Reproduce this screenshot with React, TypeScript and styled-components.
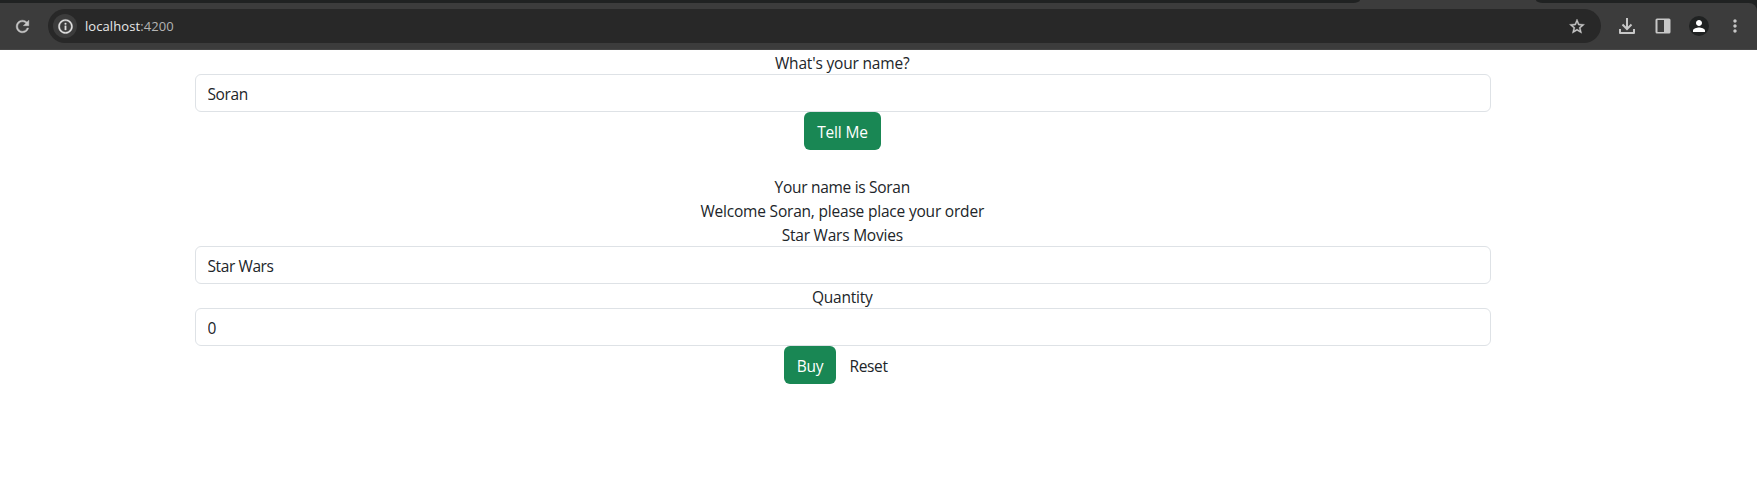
import React from "react";
import styled, { createGlobalStyle } from "styled-components";
import { MdRefresh, MdInfoOutline, MdStarBorder, MdPerson, MdMoreVert } from "react-icons/md";

const GlobalStyle = createGlobalStyle`
  *, *::before, *::after { box-sizing: border-box; }
  body {
    margin: 0;
    background: #fff;
    color: #212529;
    font-family: "Open Sans", "Noto Sans", sans-serif;
    font-size: 15.5px;
    line-height: 24px;
    overflow: hidden;
  }
`;

const Chrome = styled.header`
  height: 50px;
  background: #202222;
`;

const TabStrip = styled.div`
  display: flex;
  justify-content: space-between;
  height: 3px;
  background: #3c3c3c;
`;

const InactiveTabs = styled.div<{ $width: number; $side: "left" | "right" }>`
  width: ${(p) => p.$width}px;
  height: 3px;
  background: #202222;
  border-bottom-${(p) => (p.$side === "left" ? "right" : "left")}-radius: 7px 3px;
`;

const Toolbar = styled.div`
  display: flex;
  align-items: center;
  height: 47px;
  padding: 0 10px 0 10px;
  background: #3c3c3c;
  border-bottom: 1px solid #474747;
  border-top-right-radius: 8px;
  color: #c7c7c7;
`;

const IconSlot = styled.span<{ $width: number }>`
  display: flex;
  align-items: center;
  justify-content: center;
  flex: none;
  width: ${(p) => p.$width}px;
  height: 24px;
`;

const BoldIcon = styled(IconSlot)`
  svg {
    stroke-width: 0.5px;
  }
  path:not([fill="none"]) {
    stroke: currentColor;
  }
  path[fill="none"] {
    stroke: none;
  }
`;

const AddressBar = styled.div`
  display: flex;
  align-items: center;
  flex: none;
  width: 1553px;
  height: 34px;
  margin-left: 14px;
  margin-right: 8px;
  padding: 0 15px 0 5px;
  border-radius: 17px;
  background: #282828;
`;

const SiteInfo = styled.span`
  display: flex;
  align-items: center;
  justify-content: center;
  width: 24px;
  height: 24px;
  border-radius: 50%;
  background: #3c3c3c;
  color: #e3e3e3;

  svg {
    stroke-width: 0.5px;
  }
  path:not([fill="none"]) {
    stroke: currentColor;
  }
  path[fill="none"] {
    stroke: none;
  }
`;

const Url = styled.span`
  flex: 1;
  margin-left: 8px;
  font-size: 13px;
  line-height: 20px;
  letter-spacing: 0.08px;
  color: #e8e8e8;
`;

const Port = styled.span`
  color: #b4b4b4;
`;

const Avatar = styled.span`
  display: flex;
  align-items: center;
  justify-content: center;
  width: 20px;
  height: 20px;
  border-radius: 50%;
  background: #202222;
  color: #fff;
`;

const Page = styled.main`
  width: 1296px;
  margin-left: 195px;
  text-align: center;
`;

const Line = styled.div<{ $spacing: number }>`
  height: 24px;
  padding: 1px 1.500px 0 0;
  letter-spacing: ${(p) => p.$spacing}px;
`;

const Field = styled.input<{ $spacing?: number }>`
  display: block;
  width: 100%;
  height: 38px;
  padding: 7px 12px 5px 11.5px;
  border: 1px solid #dee2e6;
  border-radius: 6px;
  background: #fff;
  color: #212529;
  font: inherit;
  letter-spacing: ${(p) => p.$spacing ?? 0}px;
`;

const Actions = styled.div<{ $after?: number }>`
  display: flex;
  justify-content: center;
  height: 38px;
  padding-right: 1px;
  margin-bottom: ${(p) => p.$after ?? 0}px;
`;

const Button = styled.button<{ $width: number; $solid?: boolean; $spacing: number }>`
  width: ${(p) => p.$width}px;
  height: 38px;
  padding: 1px 0 0;
  border: 0;
  border-radius: 6px;
  background: ${(p) => (p.$solid ? "#198754" : "transparent")};
  color: ${(p) => (p.$solid ? "#fff" : "#212529")};
  font: inherit;
  letter-spacing: ${(p) => p.$spacing}px;
`;

const DownloadIcon = () => (
  <svg width="16" height="16" viewBox="0 0 16 16" fill="none" stroke="currentColor" strokeWidth="2">
    <path d="M8 0v10.500M3.500 6.500l4.500 4.500l4.500-4.500" />
    <path strokeLinejoin="round" d="M1 11v4h14v-4" />
  </svg>
);

const SidePanelIcon = () => (
  <svg width="16" height="16" viewBox="0 0 16 16">
    <path
      fill="currentColor"
      fillRule="evenodd"
      d="M2 .5h12a1.500 1.500 0 0 1 1.500 1.500v12a1.500 1.500 0 0 1-1.500 1.500H2A1.500 1.500 0 0 1 .5 14V2A1.500 1.500 0 0 1 2 .5zM2.500 2v12H9V2z"
    />
  </svg>
);

export default function App() {
  return (
    <>
      <GlobalStyle />
      <Chrome>
        <TabStrip>
          <InactiveTabs $width={1360} $side="left" />
          <InactiveTabs $width={221} $side="right" />
        </TabStrip>
        <Toolbar>
          <BoldIcon $width={24}><MdRefresh size={19} /></BoldIcon>
          <AddressBar>
            <SiteInfo><MdInfoOutline size={17} /></SiteInfo>
            <Url>localhost<Port>:4200</Port></Url>
            <BoldIcon $width={18}><MdStarBorder size={19} /></BoldIcon>
          </AddressBar>
          <IconSlot $width={36}><DownloadIcon /></IconSlot>
          <IconSlot $width={36}><SidePanelIcon /></IconSlot>
          <IconSlot $width={36}><Avatar><MdPerson size={18} /></Avatar></IconSlot>
          <IconSlot $width={36}><MdMoreVert size={20} /></IconSlot>
        </Toolbar>
      </Chrome>
      <Page>
        <Line $spacing={-0.18}>What's your name?</Line>
        <Field $spacing={-0.4} defaultValue="Soran" />
        <Actions $after={24}>
          <Button $width={77} $solid $spacing={-0.15}>Tell Me</Button>
        </Actions>
        <Line $spacing={-0.3}>Your name is Soran</Line>
        <Line $spacing={-0.2}>Welcome Soran, please place your order</Line>
        <Line $spacing={-0.22}>Star Wars Movies</Line>
        <Field $spacing={-0.4} defaultValue="Star Wars" />
        <Line $spacing={-0.22}>Quantity</Line>
        <Field defaultValue="0" />
        <Actions>
          <Button $width={52} $solid $spacing={-0.3}>Buy</Button>
          <Button $width={65} $spacing={-0.35}>Reset</Button>
        </Actions>
      </Page>
    </>
  );
}
